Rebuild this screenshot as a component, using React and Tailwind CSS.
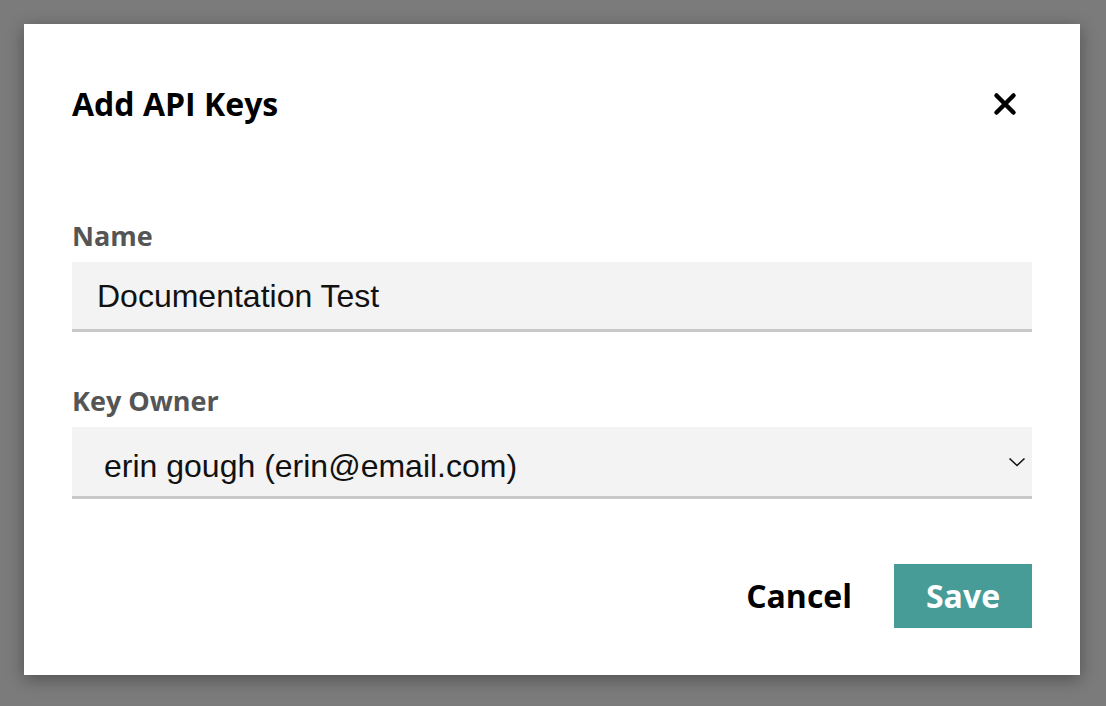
import { useState } from 'react'

// modal: add api key
function CloseIcon() {
  return (
    <svg width="24" height="24" viewBox="0 0 24 24" fill="none" stroke="#000" strokeWidth="4.5" strokeLinecap="round">
      <path d="M3.5 3.5 L20.5 20.5 M20.5 3.5 L3.5 20.5" />
    </svg>
  )
}

function Chevron() {
  return (
    <svg width="18" height="10" viewBox="0 0 18 10" fill="none" stroke="#111" strokeWidth="1.6">
      <path d="M1.5 1.5 L9 8.5 L16.5 1.5" />
    </svg>
  )
}

export default function App() {
  const [name, setName] = useState('Documentation Test')
  const [owner, setOwner] = useState('erin')

  return (
    <div className="w-full h-[706px] bg-[#7b7b7b] pt-[24px] pl-[24px] overflow-hidden">
      <div className="w-[1056px] h-[651px] bg-white shadow-[0_4px_16px_rgba(0,0,0,0.35)] px-[48px] pt-[60px] font-['Open_Sans',sans-serif]">
        <div className="flex items-center justify-between h-[40px]">
          <h2 className="text-[32px] font-bold text-black leading-none">Add API Keys</h2>
          <button className="mr-[15px] flex items-center justify-center">
            <CloseIcon />
          </button>
        </div>

        <label className="block mt-[98px] text-[27px] font-bold text-[#555] leading-none">Name</label>
        <input
          value={name}
          onChange={(e) => setName(e.target.value)}
          className="mt-[13px] block w-full h-[70px] bg-[#f3f3f3] border-b-[3px] border-[#c8c8c8] pl-[25px] pt-[2px] text-[32px] text-[#111] font-['Liberation_Sans',Arial,sans-serif] outline-none"
        />

        <label className="block mt-[55px] text-[27px] font-bold text-[#555] leading-none">Key Owner</label>
        <div className="relative mt-[13px]">
          <select
            value={owner}
            onChange={(e) => setOwner(e.target.value)}
            className="appearance-none block w-full h-[72px] bg-[#f3f3f3] border-b-[3px] border-[#c8c8c8] pl-[32px] pt-[8px] text-[32px] text-[#111] font-['Liberation_Sans',Arial,sans-serif] outline-none"
          >
            <option value="erin">erin gough (erin@email.com)</option>
          </select>
          <span className="absolute right-[6px] top-[30px] pointer-events-none">
            <Chevron />
          </span>
        </div>

        <div className="flex justify-end items-center mt-[65px] gap-[42px]">
          <button className="text-[32px] font-bold text-black leading-none">Cancel</button>
          <button className="w-[138px] h-[64px] bg-[#479c98] text-white text-[32px] font-bold leading-none">Save</button>
        </div>
      </div>
    </div>
  )
}
